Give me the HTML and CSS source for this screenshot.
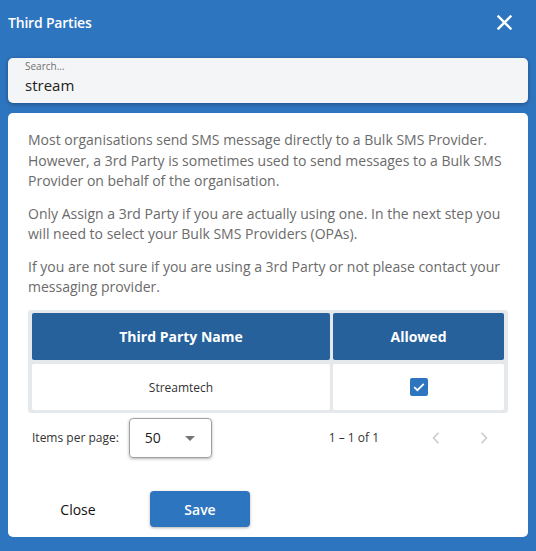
FILE: index.html
```html
<!DOCTYPE html>
<html lang="en">
<head>
<meta charset="utf-8">
<title>Third Parties</title>
<link rel="stylesheet" href="styles.css">
</head>
<body>
<div class="dialog">
  <div class="dlg-header">
    <span class="dlg-title">Third Parties</span>
    <button class="icon-btn close-x" aria-label="Close">
      <svg width="15" height="15" viewBox="0 0 15 15"><path d="M1.5 1.5 L13.5 13.5 M13.5 1.5 L1.5 13.5" stroke="#fff" stroke-width="2.4" stroke-linecap="square" fill="none"/></svg>
    </button>
  </div>
  <div class="search">
    <label class="search-label">Search...</label>
    <div class="search-value">stream</div>
  </div>
  <div class="card">
    <p>Most organisations send SMS message directly to a Bulk SMS Provider. However, a 3rd Party is sometimes used to send messages to a Bulk SMS Provider on behalf of the organisation.</p>
    <p>Only Assign a 3rd Party if you are actually using one. In the next step you will need to select your Bulk SMS Providers (OPAs).</p>
    <p>If you are not sure if you are using a 3rd Party or not please contact your messaging provider.</p>
    <div class="grid">
      <div class="th">Third Party Name</div>
      <div class="th">Allowed</div>
      <div class="td name">Streamtech</div>
      <div class="td">
        <span class="checkbox">
          <svg width="18" height="18" viewBox="0 0 18 18"><path d="M4.2 9.2 L7.4 12.2 L13.8 5.8" stroke="#fff" stroke-width="1.8" fill="none"/></svg>
        </span>
      </div>
    </div>
    <div class="paginator">
      <span class="ipp">Items per page:</span>
      <div class="select">
        <span class="sel-val">50</span>
        <span class="sel-arrow"></span>
      </div>
      <span class="range">1 – 1 of 1</span>
      <button class="icon-btn page-btn" aria-label="Previous page">
        <svg width="8" height="12" viewBox="0 0 8 12"><path d="M6.5 0.8 L1.5 6 L6.5 11.2" stroke="#c9c9c9" stroke-width="1.5" fill="none"/></svg>
      </button>
      <button class="icon-btn page-btn" aria-label="Next page">
        <svg width="8" height="12" viewBox="0 0 8 12"><path d="M1.5 0.8 L6.5 6 L1.5 11.2" stroke="#c9c9c9" stroke-width="1.5" fill="none"/></svg>
      </button>
    </div>
    <div class="actions">
      <button class="btn btn-plain">Close</button>
      <button class="btn btn-primary">Save</button>
    </div>
  </div>
</div>
</body>
</html>
```
FILE: styles.css
```css
* { box-sizing: border-box; }
html, body { margin: 0; padding: 0; }
body {
  background: #2e75c0;
  font-family: "Open Sans", "Liberation Sans", sans-serif;
  width: 536px;
  height: 551px;
  overflow: hidden;
}
.dialog { display: flex; flex-direction: column; }
.dlg-header {
  height: 44px;
  display: flex;
  align-items: center;
  justify-content: space-between;
  padding: 0 24px 0 8px;
}
.dlg-title {
  color: #fff;
  font-size: 14px;
  font-weight: 600;
  letter-spacing: -0.2px;
}
.icon-btn {
  border: 0;
  background: transparent;
  padding: 0;
  display: flex;
  align-items: center;
  justify-content: center;
  cursor: pointer;
}
.close-x { width: 15px; height: 15px; margin-top: 1px; }
.search {
  margin: 14px 8px 0;
  height: 45px;
  background: #f4f5f7;
  border-radius: 5px;
  box-shadow: 0 1px 4px rgba(0, 0, 0, 0.35);
  padding: 2px 17px 0;
}
.search-label {
  display: block;
  font-size: 10px;
  line-height: 12px;
  color: #6f6f6f;
}
.search-value {
  margin-top: 3px;
  font-size: 15px;
  line-height: 20px;
  color: #222;
}
.card {
  margin: 10px 8px 0;
  background: #fff;
  border-radius: 5px;
  padding: 17px 20px 10px;
}
.card p {
  margin: 0 0 12px;
  font-size: 14px;
  line-height: 20.5px;
  color: #6b6b6b;
}
.grid {
  margin-top: 1px;
  display: grid;
  grid-template-columns: 298px 171px;
  grid-template-rows: 47px 46px;
  column-gap: 3px;
  row-gap: 4px;
  padding: 3px 4px;
  background: #e6e9ec;
  border-radius: 3px;
}
.th {
  background: #26619c;
  color: #fff;
  font-weight: 700;
  font-size: 14px;
  border-radius: 2px;
  display: flex;
  align-items: center;
  justify-content: center;
}
.td {
  background: #fff;
  border-radius: 2px;
  display: flex;
  align-items: center;
  justify-content: center;
  padding-top: 1px;
}
.name { font-size: 12px; color: #333; }
.checkbox {
  width: 18px;
  height: 18px;
  background: #2e75c0;
  border-radius: 2px;
  display: flex;
}
.paginator {
  margin-top: 5px;
  height: 40px;
  display: flex;
  align-items: center;
}
.ipp {
  margin-left: 4px;
  font-size: 12px;
  color: #333;
}
.select {
  margin-left: 10px;
  width: 83px;
  height: 40px;
  border: 1px solid #a0a0a0;
  border-radius: 4px;
  box-shadow: 0 1px 3px rgba(0, 0, 0, 0.3);
  display: flex;
  align-items: center;
  padding: 0 16px 0 15px;
  justify-content: space-between;
}
.sel-val { font-size: 14px; color: #222; }
.sel-arrow {
  width: 0;
  height: 0;
  border-left: 5px solid transparent;
  border-right: 5px solid transparent;
  border-top: 5px solid #757575;
  margin-top: 2px;
}
.range {
  margin-left: auto;
  margin-right: 33px;
  font-size: 12px;
  color: #333;
}
.page-btn { width: 48px; height: 40px; }
.actions {
  margin-top: 33.5px;
  display: flex;
  gap: 22px;
}
.btn {
  width: 100px;
  height: 36px;
  border: 0;
  border-radius: 4px;
  font-family: inherit;
  font-size: 14px;
  cursor: pointer;
}
.btn-plain { background: transparent; color: #111; }
.btn-primary {
  background: #2e75c0;
  color: #fff;
  font-weight: 600;
  box-shadow: 0 1px 3px rgba(0, 0, 0, 0.3);
}
```
